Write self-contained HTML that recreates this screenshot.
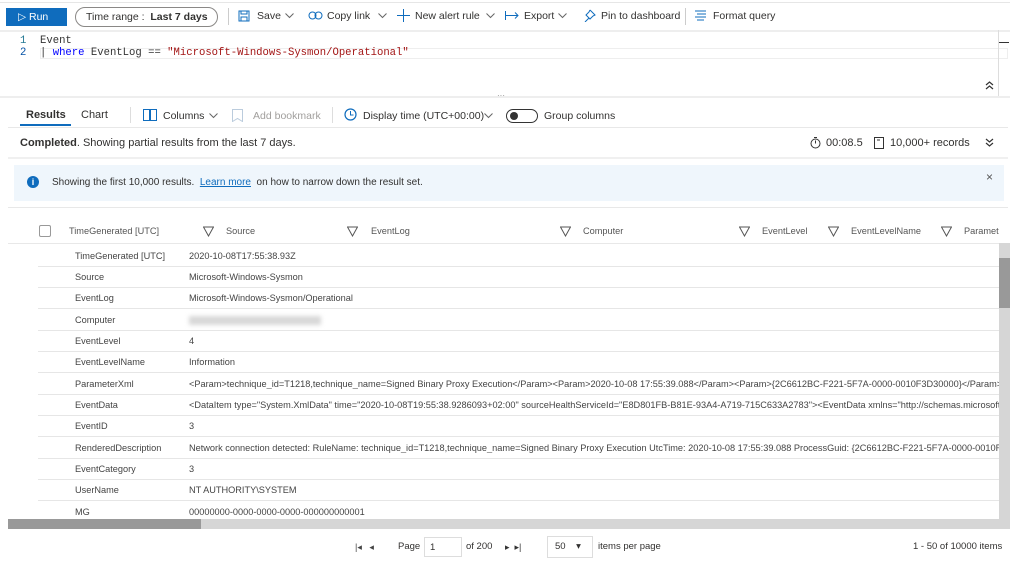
<!DOCTYPE html>
<html><head><meta charset="utf-8"><style>
*{box-sizing:border-box;margin:0;padding:0}
body{width:1024px;height:562px;overflow:hidden;background:#fff;font-family:"Liberation Sans",sans-serif;color:#323130;position:relative;font-size:11px}
.a{position:absolute;white-space:nowrap}
.t{font-size:10.5px;color:#323130}
.hr{position:absolute;height:1px;background:#e8e8e8}
.row{position:absolute;left:38px;width:961px;height:21px;border-bottom:1px solid #e6e6e6;font-size:9.2px;color:#444}
.row span{position:absolute;top:5px;white-space:nowrap}
.row .l{left:37px}.row .v{left:151px;width:810px;overflow:hidden}
.hd{position:absolute;top:226px;font-size:9.2px;color:#555}
.f{position:absolute;top:226px}
.cv{position:absolute}
</style></head><body>
<div class="hr" style="left:0;top:2px;width:1010px;background:#e6e6e6"></div>
<div class="a" style="left:6px;top:8px;width:61px;height:18px;background:#0f6cbd;color:#fff;font-size:10.5px;padding:3px 0 0 12px">▷ Run</div>
<div class="a" style="left:75px;top:7px;width:143px;height:20px;border:1px solid #8a8886;border-radius:10px;font-size:10.5px;padding:3px 0 0 10px">Time range :&nbsp; <b>Last 7 days</b></div>
<div class="a" style="left:228px;top:8px;width:1px;height:17px;background:#ccc"></div>
<svg class="a" style="left:238px;top:10px" width="12" height="12"><rect x="1" y="1" width="10" height="10" fill="none" stroke="#0f6cbd"/><rect x="3" y="1" width="6" height="3" fill="none" stroke="#0f6cbd"/><rect x="3" y="7" width="6" height="4" fill="none" stroke="#0f6cbd"/></svg>
<div class="a t" style="left:257px;top:10px">Save</div>
<svg class="cv" style="left:285px;top:13px" width="9" height="6"><path d="M0.5 0.5l4 4 4-4" fill="none" stroke="#666"/></svg>
<svg class="a" style="left:308px;top:11px" width="15" height="9"><circle cx="4.5" cy="4.5" r="3.5" fill="none" stroke="#0f6cbd"/><circle cx="10.5" cy="4.5" r="3.5" fill="none" stroke="#0f6cbd"/></svg>
<div class="a t" style="left:327px;top:10px">Copy link</div>
<svg class="cv" style="left:378px;top:13px" width="9" height="6"><path d="M0.5 0.5l4 4 4-4" fill="none" stroke="#666"/></svg>
<svg class="a" style="left:397px;top:9px" width="13" height="13"><path d="M6.5 0v13M0 6.5h13" stroke="#0f6cbd"/></svg>
<div class="a t" style="left:415px;top:10px">New alert rule</div>
<svg class="cv" style="left:486px;top:13px" width="9" height="6"><path d="M0.5 0.5l4 4 4-4" fill="none" stroke="#666"/></svg>
<svg class="a" style="left:505px;top:11px" width="14" height="9"><path d="M0.5 0v9M1 4.5h12M10 1.5l3 3-3 3" fill="none" stroke="#0f6cbd"/></svg>
<div class="a t" style="left:524px;top:10px">Export</div>
<svg class="cv" style="left:558px;top:13px" width="9" height="6"><path d="M0.5 0.5l4 4 4-4" fill="none" stroke="#666"/></svg>
<svg class="a" style="left:583px;top:9px" width="13" height="13"><path d="M7 1l5 5-2 1-3 3-1-1-4 4M7 1l-1 2-3 3 4 4" fill="none" stroke="#0f6cbd"/></svg>
<div class="a t" style="left:601px;top:10px">Pin to dashboard</div>
<div class="a" style="left:685px;top:8px;width:1px;height:17px;background:#ccc"></div>
<svg class="a" style="left:694px;top:10px" width="13" height="11"><path d="M1 1h11M3 4h9M1 7h11M3 10h7" stroke="#0f6cbd"/></svg>
<div class="a t" style="left:713px;top:10px">Format query</div>
<div class="hr" style="left:0;top:30px;width:1010px;height:2px;background:#eee"></div>
<div class="a" style="left:40px;top:48px;width:968px;height:11px;border:1px solid #eee"></div>
<div class="a" style="left:20px;top:35px;font-family:'Liberation Mono',monospace;font-size:10.6px;line-height:12px;color:#237893">1<br><span style="color:#0451a5">2</span></div>
<div class="a" style="left:40px;top:35px;font-family:'Liberation Mono',monospace;font-size:10.6px;line-height:12px;color:#333">Event<br>| <span style="color:#0000ff">where</span> EventLog == <span style="color:#a31515">"Microsoft-Windows-Sysmon/Operational"</span></div>
<div class="a" style="left:998px;top:30px;width:1px;height:66px;background:#ddd"></div>
<div class="a" style="left:999px;top:42px;width:10px;height:1px;background:#333"></div>
<svg class="a" style="left:985px;top:81px" width="9" height="9"><path d="M1 4l3.5-3 3.5 3M1 8l3.5-3 3.5 3" fill="none" stroke="#333" stroke-width="1.2"/></svg>
<div class="hr" style="left:0;top:96px;width:1010px;height:2px;background:#eee"></div>
<div class="a" style="left:497px;top:91px;font-size:8px;color:#888">···</div>
<div class="a" style="left:26px;top:109px;font-size:11px;font-weight:bold">Results</div>
<div class="a" style="left:20px;top:124px;width:51px;height:2px;background:#0f6cbd"></div>
<div class="a t" style="left:81px;top:109px;font-size:11px">Chart</div>
<div class="a" style="left:130px;top:107px;width:1px;height:16px;background:#ddd"></div>
<svg class="a" style="left:143px;top:109px" width="14" height="12"><rect x="0.5" y="0.5" width="6" height="11" fill="none" stroke="#0f6cbd"/><rect x="7.5" y="0.5" width="6" height="11" fill="none" stroke="#0f6cbd"/></svg>
<div class="a t" style="left:163px;top:110px">Columns</div>
<svg class="cv" style="left:209px;top:113px" width="9" height="6"><path d="M0.5 0.5l4 4 4-4" fill="none" stroke="#666"/></svg>
<svg class="a" style="left:232px;top:109px" width="11" height="13"><path d="M0.5 0.5h10v12l-5-3-5 3z" fill="none" stroke="#bcd"/></svg>
<div class="a t" style="left:253px;top:110px;color:#a19f9d">Add bookmark</div>
<div class="a" style="left:332px;top:107px;width:1px;height:16px;background:#ddd"></div>
<svg class="a" style="left:344px;top:108px" width="13" height="13"><circle cx="6.5" cy="6.5" r="5.5" fill="none" stroke="#0f6cbd" stroke-width="1.2"/><path d="M6.5 3v4h3" fill="none" stroke="#0f6cbd"/></svg>
<div class="a t" style="left:363px;top:110px">Display time (UTC+00:00)</div>
<svg class="cv" style="left:484px;top:113px" width="9" height="6"><path d="M0.5 0.5l4 4 4-4" fill="none" stroke="#666"/></svg>
<div class="a" style="left:506px;top:109px;width:32px;height:14px;border:1px solid #333;border-radius:7px"></div>
<div class="a" style="left:510px;top:112px;width:8px;height:8px;border-radius:4px;background:#333"></div>
<div class="a t" style="left:544px;top:110px">Group columns</div>
<div class="hr" style="left:8px;top:127px;width:1000px"></div>
<div class="a" style="left:20px;top:137px;font-size:11px"><b>Completed</b>. Showing partial results from the last 7 days.</div>
<svg class="a" style="left:810px;top:137px" width="11" height="12"><circle cx="5.5" cy="6.5" r="4.5" fill="none" stroke="#333"/><path d="M4 0.5h3M5.5 3.5v3" stroke="#333"/></svg>
<div class="a" style="left:826px;top:137px;font-size:11px">00:08.5</div>
<svg class="a" style="left:874px;top:137px" width="10" height="12"><rect x="0.5" y="0.5" width="9" height="11" fill="none" stroke="#333"/><path d="M3 3h3" stroke="#333"/></svg>
<div class="a" style="left:890px;top:137px;font-size:11px">10,000+ records</div>
<svg class="a" style="left:985px;top:138px" width="9" height="9"><path d="M1 1l3.5 3 3.5-3M1 5l3.5 3 3.5-3" fill="none" stroke="#333" stroke-width="1.2"/></svg>
<div class="hr" style="left:8px;top:157px;width:1000px;height:2px;background:#f0f0f0"></div>
<div class="a" style="left:14px;top:165px;width:990px;height:36px;background:#eff6fc"></div>
<div class="a" style="left:27px;top:176px;width:12px;height:12px;border-radius:6px;background:#0f6cbd;color:#fff;font-size:9px;font-weight:bold;text-align:center;line-height:12px">i</div>
<div class="a" style="left:52px;top:177px;font-size:10px">Showing the first 10,000 results. &nbsp;<span style="color:#0f6cbd;text-decoration:underline">Learn more</span>&nbsp; on how to narrow down the result set.</div>
<div class="a" style="left:986px;top:170px;font-size:12px;color:#555">×</div>
<div class="hr" style="left:8px;top:207px;width:1000px"></div>
<div class="a" style="left:39px;top:225px;width:12px;height:12px;border:1px solid #999;border-radius:2px"></div>
<div class="hd" style="left:69px">TimeGenerated [UTC]</div>
<svg class="f" style="left:203px" width="11" height="11"><path d="M0.5 1h10L5.5 10z" fill="none" stroke="#555"/></svg><div class="hd" style="left:226px">Source</div>
<svg class="f" style="left:347px" width="11" height="11"><path d="M0.5 1h10L5.5 10z" fill="none" stroke="#555"/></svg><div class="hd" style="left:371px">EventLog</div>
<svg class="f" style="left:560px" width="11" height="11"><path d="M0.5 1h10L5.5 10z" fill="none" stroke="#555"/></svg><div class="hd" style="left:583px">Computer</div>
<svg class="f" style="left:739px" width="11" height="11"><path d="M0.5 1h10L5.5 10z" fill="none" stroke="#555"/></svg><div class="hd" style="left:762px">EventLevel</div>
<svg class="f" style="left:828px" width="11" height="11"><path d="M0.5 1h10L5.5 10z" fill="none" stroke="#555"/></svg><div class="hd" style="left:851px">EventLevelName</div>
<svg class="f" style="left:941px" width="11" height="11"><path d="M0.5 1h10L5.5 10z" fill="none" stroke="#555"/></svg><div class="hd" style="left:964px;width:35px;overflow:hidden">Parameters</div>
<div class="hr" style="left:8px;top:243px;width:991px"></div>
<div class="row" style="top:246px"><span class="l">TimeGenerated [UTC]</span><span class="v">2020-10-08T17:55:38.93Z</span></div>
<div class="row" style="top:267px"><span class="l">Source</span><span class="v">Microsoft-Windows-Sysmon</span></div>
<div class="row" style="top:288px"><span class="l">EventLog</span><span class="v">Microsoft-Windows-Sysmon/Operational</span></div>
<div class="row" style="top:310px"><span class="l">Computer</span><span class="v" style="top:6px;width:132px;height:9px;background:#d8d8d8;filter:blur(2px)"></span></div>
<div class="row" style="top:331px"><span class="l">EventLevel</span><span class="v">4</span></div>
<div class="row" style="top:352px"><span class="l">EventLevelName</span><span class="v">Information</span></div>
<div class="row" style="top:374px"><span class="l">ParameterXml</span><span class="v">&lt;Param&gt;technique_id=T1218,technique_name=Signed Binary Proxy Execution&lt;/Param&gt;&lt;Param&gt;2020-10-08 17:55:39.088&lt;/Param&gt;&lt;Param&gt;{2C6612BC-F221-5F7A-0000-0010F3D30000}&lt;/Param&gt;&lt;Param&gt;</span></div>
<div class="row" style="top:395px"><span class="l">EventData</span><span class="v">&lt;DataItem type="System.XmlData" time="2020-10-08T19:55:38.9286093+02:00" sourceHealthServiceId="E8D801FB-B81E-93A4-A719-715C633A2783"&gt;&lt;EventData xmlns="http://schemas.microsoft.com</span></div>
<div class="row" style="top:416px"><span class="l">EventID</span><span class="v">3</span></div>
<div class="row" style="top:438px"><span class="l">RenderedDescription</span><span class="v">Network connection detected: RuleName: technique_id=T1218,technique_name=Signed Binary Proxy Execution UtcTime: 2020-10-08 17:55:39.088 ProcessGuid: {2C6612BC-F221-5F7A-0000-0010F3D30000}</span></div>
<div class="row" style="top:459px"><span class="l">EventCategory</span><span class="v">3</span></div>
<div class="row" style="top:480px"><span class="l">UserName</span><span class="v">NT AUTHORITY\SYSTEM</span></div>
<div class="row" style="top:502px"><span class="l">MG</span><span class="v">00000000-0000-0000-0000-000000000001</span></div>
<div class="a" style="left:999px;top:243px;width:11px;height:286px;background:#d6d6d6"></div>
<div class="a" style="left:999px;top:258px;width:11px;height:50px;background:#999"></div>
<div class="a" style="left:8px;top:519px;width:991px;height:10px;background:#d6d6d6"></div>
<div class="a" style="left:8px;top:519px;width:193px;height:10px;background:#999"></div>
<div class="a" style="left:355px;top:542px;font-size:9px;color:#444">|◂ &nbsp; ◂</div>
<div class="a" style="left:398px;top:541px;font-size:9.5px">Page</div>
<div class="a" style="left:424px;top:537px;width:38px;height:20px;border:1px solid #ddd;font-size:9.5px;padding:4px 0 0 5px">1</div>
<div class="a" style="left:466px;top:541px;font-size:9.5px">of 200</div>
<div class="a" style="left:505px;top:542px;font-size:9px;color:#333">▸ &nbsp;▸|</div>
<div class="a" style="left:547px;top:536px;width:46px;height:22px;border:1px solid #ddd;font-size:9.5px;padding:4px 0 0 7px">50 &nbsp;&nbsp; ▾</div>
<div class="a" style="left:598px;top:541px;font-size:9.5px">items per page</div>
<div class="a" style="left:913px;top:541px;font-size:9.5px">1 - 50 of 10000 items</div>
</body></html>
